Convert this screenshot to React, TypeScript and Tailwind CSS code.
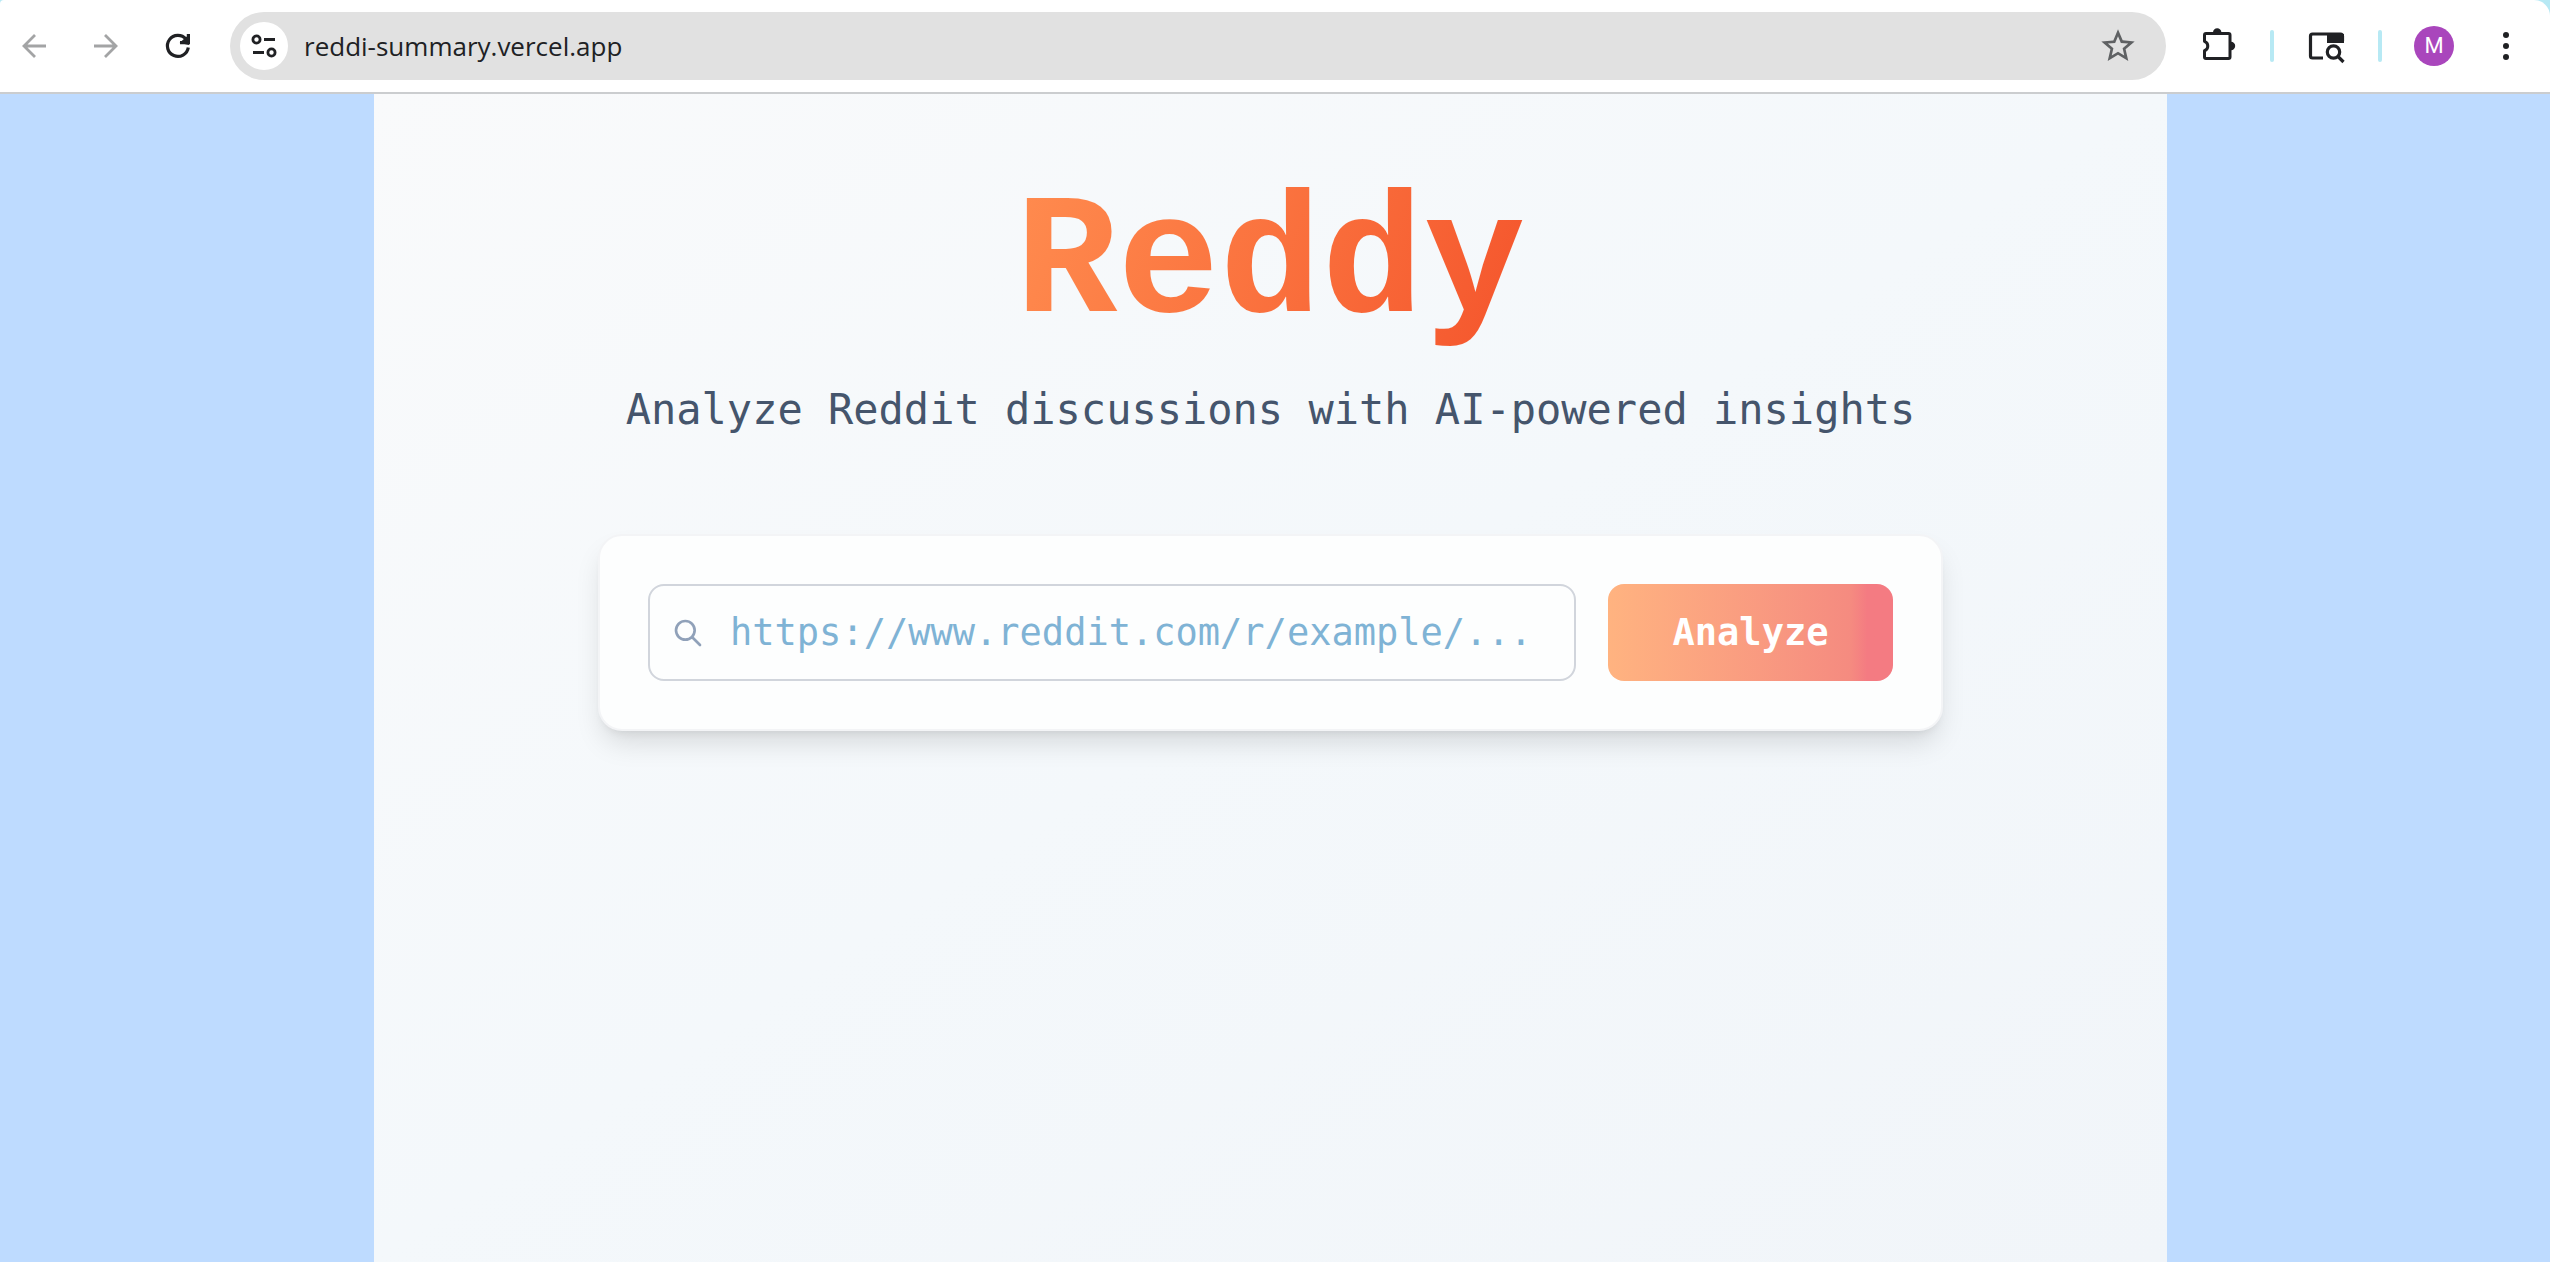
import React from 'react';

function Divider() {
    return <span className="h-8 w-1 rounded-full bg-[#b7e9f4]" />;
}

function BrowserBar() {
    return (
        <div className="bg-[#b7e9f4]">
            <header className="flex h-[94px] items-center rounded-tl rounded-tr-2xl border-b-2 border-[#cbcdcf] bg-white pr-6 pl-4 text-[#202124]">
                <nav className="flex shrink-0 items-center gap-9 pr-[34px]">
                    <button type="button" aria-label="Back" className="text-[#a3a4a5]">
                        <svg viewBox="0 0 36 36" className="size-9" fill="none" stroke="currentColor" strokeWidth="2.8">
                            <path d="M30 18H8M19 7L8 18l11 11" />
                        </svg>
                    </button>
                    <button type="button" aria-label="Forward" className="text-[#a3a4a5]">
                        <svg viewBox="0 0 36 36" className="size-9" fill="none" stroke="currentColor" strokeWidth="2.8">
                            <path d="M6 18h22M17 7l11 11-11 11" />
                        </svg>
                    </button>
                    <button type="button" aria-label="Reload">
                        <svg viewBox="0 0 36 36" className="size-9" fill="none" stroke="currentColor" strokeWidth="3.2">
                            <path d="M28.3 19.5A10.5 10.5 0 1 1 26 11.2" />
                            <path d="M28.4 6v8.6H20" />
                            <path d="M23 14l4.5-4v5z" fill="currentColor" />
                        </svg>
                    </button>
                </nav>
                <div className="flex h-[68px] min-w-0 flex-1 items-center rounded-full bg-[#e1e1e1] pr-7 pl-[10px]">
                    <button type="button" aria-label="Site information" className="flex size-12 shrink-0 items-center justify-center rounded-full bg-white">
                        <svg viewBox="0 0 28 28" className="size-7" fill="none" stroke="currentColor" strokeWidth="2.8">
                            <circle cx="6.5" cy="7.5" r="3.6" />
                            <path d="M14 7.5h11M3 20.5h11" />
                            <circle cx="21.5" cy="20.5" r="3.6" />
                        </svg>
                    </button>
                    <input
                        type="text"
                        aria-label="Address"
                        defaultValue="reddi-summary.vercel.app"
                        className="min-w-0 flex-1 bg-transparent pl-4 font-['Open_Sans',sans-serif] text-[26px] outline-none"
                    />
                    <button type="button" aria-label="Bookmark" className="text-[#5f6163]">
                        <svg viewBox="0 0 24 24" className="size-10" fill="currentColor">
                            <path d="M22 9.24l-7.19-.62L12 2 9.19 8.63 2 9.24l5.46 4.73L5.82 21 12 17.27 18.18 21l-1.63-7.03L22 9.24zM12 15.4l-3.76 2.27 1-4.28-3.32-2.88 4.38-.38L12 6.1l1.71 4.04 4.38.38-3.32 2.88 1 4.28L12 15.4z" />
                        </svg>
                    </button>
                </div>
                <div className="flex shrink-0 items-center gap-8 pl-8">
                    <button type="button" aria-label="Extensions">
                        <svg viewBox="0 0 40 40" className="size-10" fill="none" stroke="currentColor" strokeWidth="3" strokeLinejoin="round">
                            <path d="M8 7.5h22.5a1.5 1.5 0 0 1 1.5 1.5v22a1.5 1.5 0 0 1-1.5 1.5H8A1.5 1.5 0 0 1 6.5 31v-6.300a5 5 0 0 0 0-9.400V9A1.500 1.500 0 0 1 8 7.500z" />
                            <path d="M15 6.500a4.200 4.200 0 0 1 8.400 0zM33 15.800a4.200 4.200 0 0 1 0 8.400z" fill="currentColor" stroke="none" />
                        </svg>
                    </button>
                    <Divider />
                    <button type="button" aria-label="Search tabs">
                        <svg viewBox="0 0 40 40" className="size-10" fill="none" stroke="currentColor" strokeWidth="3.2">
                            <path d="M17 32H6.500a2 2 0 0 1-2-2V10a2 2 0 0 1 2-2h28a2 2 0 0 1 2 2v5" />
                            <path d="M21 8h17v9H21z" fill="currentColor" stroke="none" />
                            <circle cx="27.500" cy="26" r="6.200" />
                            <path d="M32 30.500l5.500 5.500" />
                        </svg>
                    </button>
                    <Divider />
                    <button type="button" aria-label="Profile" className="size-10 rounded-full bg-[#a946bc] font-[Roboto,sans-serif] text-[22px] leading-10 text-white">
                        M
                    </button>
                    <button type="button" aria-label="Menu">
                        <svg viewBox="0 0 40 40" className="size-10" fill="currentColor">
                            <circle cx="20" cy="9" r="3" />
                            <circle cx="20" cy="20" r="3" />
                            <circle cx="20" cy="31" r="3" />
                        </svg>
                    </button>
                </div>
            </header>
        </div>
    );
}

function SearchCard() {
    return (
        <form
            onSubmit={(e) => e.preventDefault()}
            className="flex w-full max-w-[1345px] gap-8 rounded-3xl border-2 border-[#f3f4f6] bg-[#fdfefe] p-12 shadow-[0_16px_28px_-5px_rgba(0,0,0,0.13),0_6px_10px_-6px_rgba(0,0,0,0.1)]"
        >
            <label className="flex h-[97px] min-w-0 flex-1 items-center rounded-2xl border-2 border-[#d1d5dc] pl-[22px]">
                <svg viewBox="0 0 24 24" className="size-8 shrink-0 text-[#90a1b9]" fill="none" stroke="currentColor" strokeWidth="2" strokeLinecap="round" strokeLinejoin="round">
                    <path d="M21 21l-6-6m2-5a7 7 0 11-14 0 7 7 0 0114 0z" />
                </svg>
                <input
                    type="url"
                    aria-label="Reddit URL"
                    placeholder="https://www.reddit.com/r/example/..."
                    className="h-full min-w-0 flex-1 bg-transparent pl-[26px] text-[37px] outline-none placeholder:text-[#7fb3d5]"
                />
            </label>
            <button
                type="submit"
                className="h-[97px] w-[285px] shrink-0 rounded-2xl bg-linear-to-r from-[#ffb380] via-[#f58b80] via-85% to-[#f47b82] to-91% text-[37px] font-bold text-white"
            >
                Analyze
            </button>
        </form>
    );
}

export default function App() {
    return (
        <div className="flex min-h-screen flex-col bg-[#bedbff]">
            <BrowserBar />
            <div className="flex flex-1 justify-center pr-[9px]">
                <main className="flex w-full max-w-[1793px] flex-col items-center bg-linear-to-br from-[#f9fafb] via-[#f4f8fb] to-[#f1f5f9] pt-[68px] font-['DejaVu_Sans_Mono',monospace]">
                    <h1 className="bg-linear-110 from-[#ff8c4f] to-[#f4532b] bg-clip-text font-['Liberation_Mono',monospace] text-[170px] leading-[208px] font-bold text-transparent">
                        Reddy
                    </h1>
                    <p className="mt-2 mb-[92px] text-[42px] leading-[64px] text-[#45556c]">Analyze Reddit discussions with AI-powered insights</p>
                    <SearchCard />
                </main>
            </div>
        </div>
    );
}
